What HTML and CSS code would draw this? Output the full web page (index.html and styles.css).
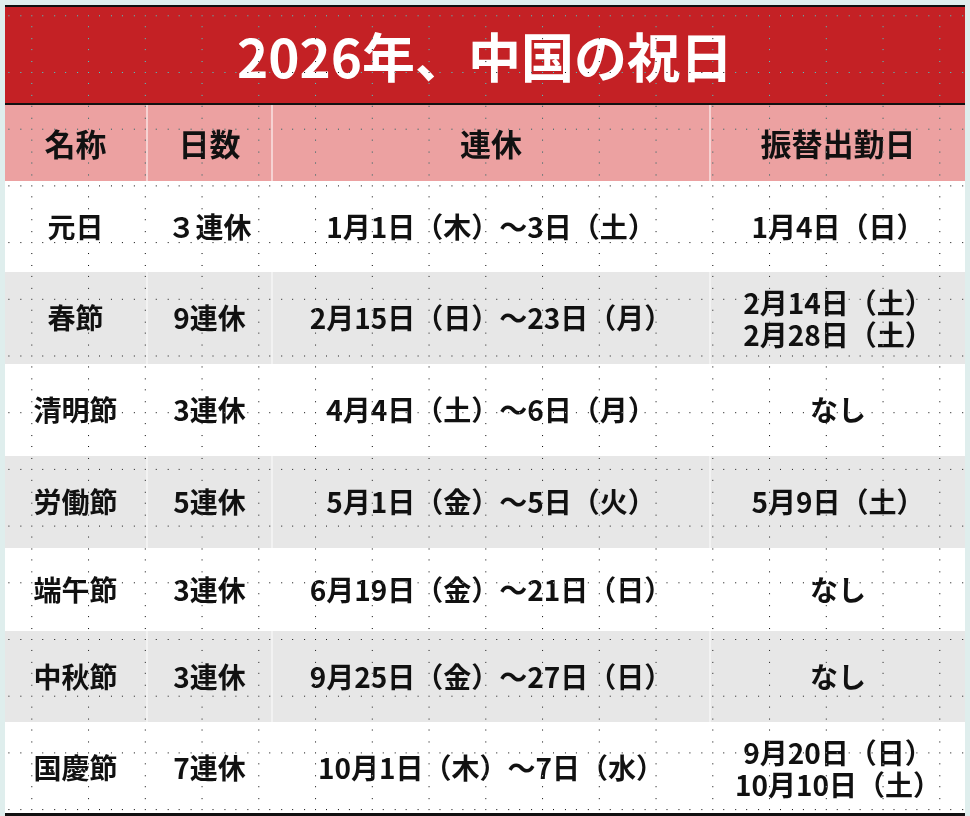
FILE: index.html
```html
<!DOCTYPE html>
<html lang="ja">
<head>
<meta charset="utf-8">
<title>2026年、中国の祝日</title>
<link rel="stylesheet" href="styles.css">
</head>
<body>
<div class="sheet">
  <div class="title">2026年、中国の祝日</div>
  <div class="row head">
    <div class="cell">名称</div>
    <div class="cell">日数</div>
    <div class="cell">連休</div>
    <div class="cell">振替出勤日</div>
  </div>
  <div class="row r1">
    <div class="cell">元日</div>
    <div class="cell">３連休</div>
    <div class="cell">1月1日（木）～3日（土）</div>
    <div class="cell">1月4日（日）</div>
  </div>
  <div class="row r2 alt">
    <div class="cell">春節</div>
    <div class="cell">9連休</div>
    <div class="cell">2月15日（日）～23日（月）</div>
    <div class="cell two">2月14日（土）<br>2月28日（土）</div>
  </div>
  <div class="row r3">
    <div class="cell">清明節</div>
    <div class="cell">3連休</div>
    <div class="cell">4月4日（土）～6日（月）</div>
    <div class="cell">なし</div>
  </div>
  <div class="row r4 alt">
    <div class="cell">労働節</div>
    <div class="cell">5連休</div>
    <div class="cell">5月1日（金）～5日（火）</div>
    <div class="cell">5月9日（土）</div>
  </div>
  <div class="row r5">
    <div class="cell">端午節</div>
    <div class="cell">3連休</div>
    <div class="cell">6月19日（金）～21日（日）</div>
    <div class="cell">なし</div>
  </div>
  <div class="row r6 alt">
    <div class="cell">中秋節</div>
    <div class="cell">3連休</div>
    <div class="cell">9月25日（金）～27日（日）</div>
    <div class="cell">なし</div>
  </div>
  <div class="row r7">
    <div class="cell">国慶節</div>
    <div class="cell">7連休</div>
    <div class="cell">10月1日（木）～7日（水）</div>
    <div class="cell two">9月20日（日）<br>10月10日（土）</div>
  </div>
  <svg class="dots" width="960" height="811" aria-hidden="true">
    <defs>
      <pattern id="grid" patternUnits="userSpaceOnUse" x="26.3" y="8.3" width="56.75" height="56.7">
        <g fill="#fff" shape-rendering="crispEdges">
          <rect x="0" y="0" width="1" height="1"/>
          <rect x="11.35" y="0" width="1" height="1"/>
          <rect x="22.7" y="0" width="1" height="1"/>
          <rect x="34.05" y="0" width="1" height="1"/>
          <rect x="45.4" y="0" width="1" height="1"/>
          <rect x="0" y="11.34" width="1" height="1"/>
          <rect x="0" y="22.68" width="1" height="1"/>
          <rect x="0" y="34.02" width="1" height="1"/>
          <rect x="0" y="45.36" width="1" height="1"/>
        </g>
      </pattern>
    </defs>
    <rect width="960" height="811" fill="url(#grid)"/>
  </svg>
</div>
</body>
</html>
```

FILE: styles.css
```css
html, body {
  margin: 0;
  padding: 0;
}
body {
  background: #dfeeed;
  width: 970px;
  height: 816px;
  overflow: hidden;
  font-family: "Noto Sans CJK JP", "Noto Sans", sans-serif;
  font-weight: 700;
  color: #111;
}
.sheet {
  position: relative;
  margin: 5px 0 0 5px;
  width: 960px;
  border-top: 2px solid #111;
  border-bottom: 3px solid #111;
  background: #fff;
}
.title {
  height: 96px;
  background: #c42125;
  color: #fff;
  font-size: 53px;
  line-height: 96px;
  text-align: center;
  border-bottom: 2px solid #111;
}
.row {
  display: grid;
  grid-template-columns: 141px 123px 436px 254px;
  column-gap: 2px;
  background: #fff;
}
.cell {
  display: flex;
  align-items: center;
  justify-content: center;
  text-align: center;
  font-size: 28px;
  line-height: 1.2;
}
.head {
  height: 76px;
  background: #f6d2d2;
}
.head .cell {
  background: #eca1a1;
  font-size: 31px;
}
.alt {
  background: #f2f2f2;
}
.alt .cell {
  background: #e7e7e7;
}
.r1 { height: 91px; }
.r2 { height: 92px; }
.r3 { height: 92px; }
.r4 { height: 92px; }
.r5 { height: 83px; }
.r6 { height: 91px; }
.r7 { height: 91px; }
.cell.two {
  line-height: 32px;
}
.dots {
  position: absolute;
  left: 0;
  top: 0;
  pointer-events: none;
  mix-blend-mode: difference;
}
```
